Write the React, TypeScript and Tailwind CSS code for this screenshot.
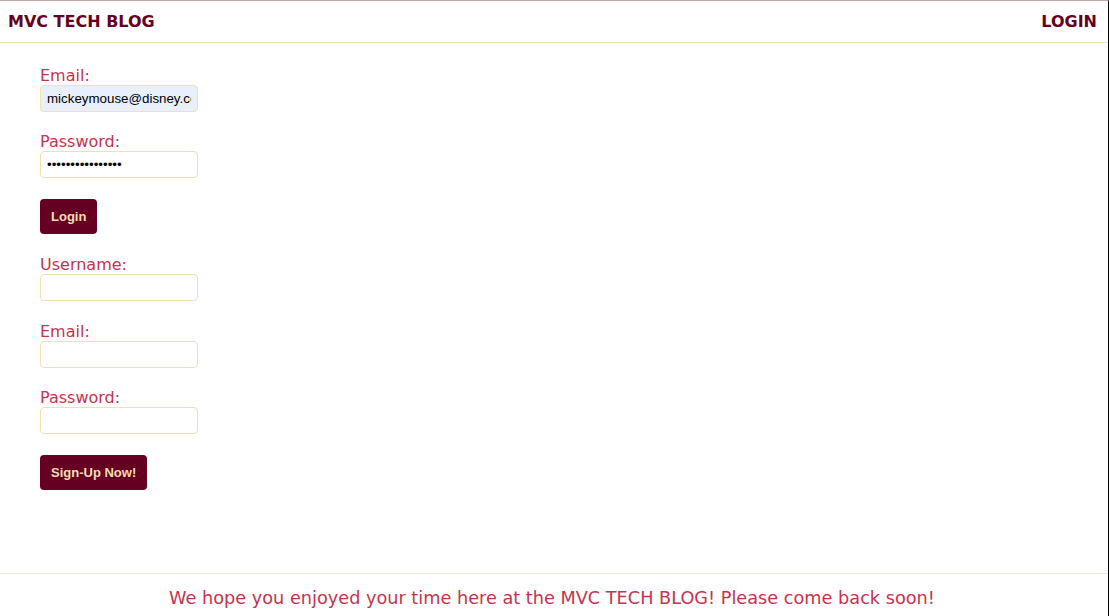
import React from 'react';

const labelCls = 'block text-base leading-[19px] text-[#c8324e]';
const inputCls =
  'block w-[158px] h-[27px] rounded-[4px] border border-[#f5deb3] px-[6px] text-[13.33px] text-black outline-none';
const btnCls =
  'h-[35px] rounded-[4px] bg-[#660022] px-[11px] text-[13px] font-bold text-[#f5deb3]';

const Field = ({
  label,
  type = 'text',
  value = '',
  filled = false,
  gap = 'mb-5',
}: {
  label: string;
  type?: string;
  value?: string;
  filled?: boolean;
  gap?: string;
}) => (
  <div className={gap}>
    <label className={labelCls}>{label}</label>
    <input
      type={type}
      value={value}
      readOnly
      className={`${inputCls} ${filled ? 'bg-[#e8f0fe]' : 'bg-white'}`}
      style={{ fontFamily: '"Liberation Sans", Arial, sans-serif' }}
    />
  </div>
);

const App = () => {
  return (
    <div
      className="h-screen flex flex-col bg-white border-t border-[#c9a3a3] border-r border-r-black"
      style={{ fontFamily: '"DejaVu Sans", Verdana, sans-serif' }}
    >
      <header className="h-[42px] flex items-center justify-between px-2 border-b border-[#f5deb3] shrink-0">
        <h1 className="text-base font-bold text-[#660022]">MVC TECH BLOG</h1>
        <a className="text-base font-bold text-[#660022] pr-[3px]">LOGIN</a>
      </header>
      <main className="flex-1 pl-10 pt-[23px]">
        <form onSubmit={(e) => e.preventDefault()}>
          <Field label="Email:" value="mickeymouse@disney.com" filled />
          <Field label="Password:" type="password" value="abcdefghijklmnop" gap="mb-[21px]" />
          <button
            className={btnCls}
            style={{ fontFamily: '"Liberation Sans", Arial, sans-serif' }}
          >
            Login
          </button>
        </form>
        <form className="mt-[21px]" onSubmit={(e) => e.preventDefault()}>
          <Field label="Username:" gap="mb-[21px]" />
          <Field label="Email:" />
          <Field label="Password:" type="password" gap="mb-[21px]" />
          <button
            className={btnCls}
            style={{ fontFamily: '"Liberation Sans", Arial, sans-serif' }}
          >
            Sign-Up Now!
          </button>
        </form>
      </main>
      <footer className="h-[43px] shrink-0 border-t border-[#efe6d2] flex items-center justify-center">
        <p className="text-[17.7px] text-[#c8324e] pt-[6px] pr-[4px]">
          We hope you enjoyed your time here at the MVC TECH BLOG! Please come back soon!
        </p>
      </footer>
    </div>
  );
};

export default App;
